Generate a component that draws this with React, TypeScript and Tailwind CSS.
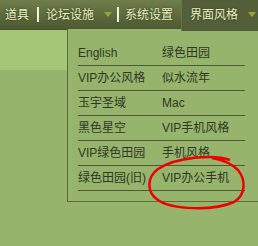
import React from 'react';

const rows: [string, string][] = [
  ['English', '绿色田园'],
  ['VIP办公风格', '似水流年'],
  ['玉宇圣域', 'Mac'],
  ['黑色星空', 'VIP手机风格'],
  ['VIP绿色田园', '手机风格'],
  ['绿色田园(旧)', 'VIP办公手机'],
];

function Arrow() {
  return (
    <svg width="8" height="5" viewBox="0 0 8 5" className="block shrink-0">
      <path d="M0 0 H8 L4 5 Z" fill="#9aa533" />
    </svg>
  );
}

function Sep() {
  return <div className="w-[2px] h-[15px] bg-[#f2f5e6] shrink-0" />;
}

export default function App() {
  const font = { fontFamily: '"Liberation Sans", "Noto Sans CJK SC", sans-serif' };

  return (
    <div className="relative w-[258px] h-[246px] overflow-hidden bg-[#96b46b]" style={font}>
      {/* top nav */}
      <div className="h-[29px] flex items-center whitespace-nowrap bg-gradient-to-b from-[#6f7e4b] to-[#4d5932] text-[12px] text-[#e9f1c4] [text-shadow:0_0_2px_#2c3418]">
        <span className="pl-[5px] shrink-0">道具</span>
        <div className="ml-[8px] flex shrink-0"><Sep /></div>
        <span className="ml-[7px] shrink-0">论坛设施</span>
        <div className="ml-[10px] flex shrink-0"><Arrow /></div>
        <div className="ml-[5px] flex shrink-0"><Sep /></div>
        <span className="ml-[6px] shrink-0">系统设置</span>
        <div className="ml-[8px] self-start h-[31px] w-[77px] shrink-0 flex items-center pl-[8px] bg-[#535f38] border-l border-[#67754a] z-10">
          <span className="pb-[2px] shrink-0">界面风格</span>
          <div className="ml-[10px] pb-[2px] flex shrink-0"><Arrow /></div>
        </div>
      </div>
      <div className="h-[41px] bg-[#a4c677] border-t border-[#48532c]" />

      {/* dropdown */}
      <div className="absolute left-[67px] top-[29px] w-[200px] border-l border-b border-[#5b6b3a] bg-[#96b46b] pt-[12px] pb-[10px] pl-[10px]">
        <div className="w-[167px]">
          {rows.map(([a, b]) => (
            <div key={a} className="flex h-[25px] items-center border-b border-[#4e5a36] text-[12px] text-[#2f3826]">
              <span className="w-[84px]">{a}</span>
              <span>{b}</span>
            </div>
          ))}
        </div>
      </div>

      {/* red annotation */}
      <svg className="absolute left-[144px] top-[154px] overflow-visible" width="106" height="60" viewBox="0 0 106 60">
        <path
          d="M86 6 C70 0, 32 3, 14 15 C3 23, 2 38, 14 46 C28 56, 70 57, 90 48 C102 41, 102 26, 94 16 C88 10, 80 6, 68 4"
          fill="none"
          stroke="#f00000"
          strokeWidth="2.5"
        />
      </svg>
    </div>
  );
}
